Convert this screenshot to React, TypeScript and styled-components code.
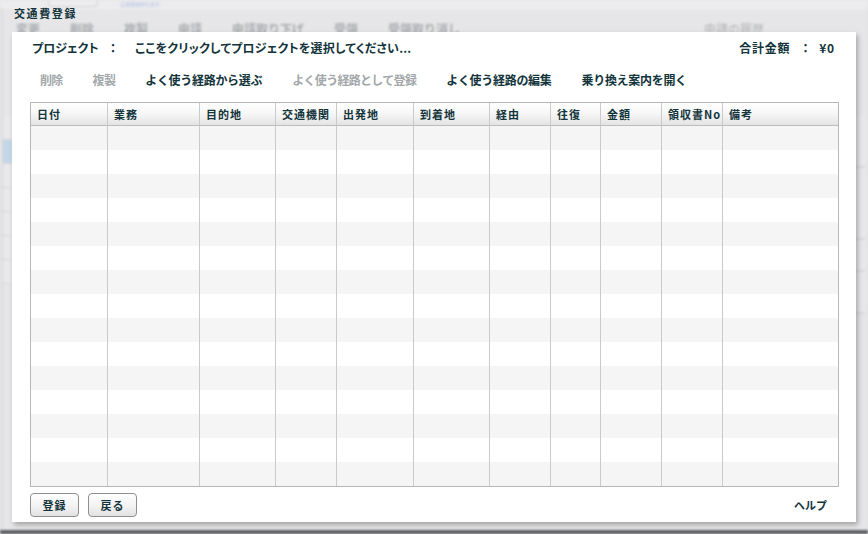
import styled, { createGlobalStyle } from 'styled-components';

const ink = '#12343a';
const faded = '#a9abae';
const jp = `"Noto Sans CJK JP", "Noto Sans", sans-serif`;

const GlobalStyle = createGlobalStyle`
  html, body {
    margin: 0;
    padding: 0;
    background: #e4e4e6;
    font-family: ${jp};
  }
`;

const Stage = styled.div`
  position: relative;
  width: 868px;
  height: 534px;
  overflow: hidden;
  background: #e4e4e6;
`;

/* ---------- blurred page behind the dialog ---------- */

const Backdrop = styled.div`
  position: absolute;
  inset: 0;
  display: flex;
  flex-direction: column;
  filter: blur(0.9px);
`;

const TopBar = styled.div`
  height: 8px;
  display: flex;
  align-items: flex-start;
  gap: 22px;
  padding-left: 48px;
  background: #ececee;
`;

const GhostButton = styled.div`
  width: 48px;
  height: 6px;
  border: 1px solid #d2d2d4;
  border-top: none;
  border-radius: 0 0 4px 4px;
  background: #ededef;
  flex-shrink: 0;
`;

const GhostLink = styled.span`
  margin-top: 1px;
  font-size: 5px;
  line-height: 6px;
  color: #b7c2e4;
  white-space: nowrap;
`;

const Sheet = styled.div`
  flex: 1;
  display: flex;
  flex-direction: column;
  border-top: 1px solid #f1f1f2;
  margin: 0 2px;
  border-left: 1px solid #d6d6d8;
  background: #e6e6e8;
`;

const MenuRow = styled.div`
  height: 26px;
  display: flex;
  align-items: flex-end;
  gap: 30px;
  padding: 0 0 0 13px;
  font-size: 12px;
  font-weight: 700;
  line-height: 12px;
  color: ${faded};
  white-space: nowrap;
`;

const HistoryTab = styled.span`
  margin-left: auto;
  margin-right: 102px;
  font-weight: 400;
  color: #b3b4b6;
`;

const SheetBody = styled.div`
  flex: 1;
  display: flex;
  justify-content: space-between;
  padding-top: 81px;
`;

const SideList = styled.div`
  width: 9px;
  display: flex;
  flex-direction: column;
`;

const SideRow = styled.div<{ $selected?: boolean }>`
  height: 23px;
  border-bottom: 1px solid #d8d8da;
  background: ${({ $selected }) => ($selected ? '#c3d7e8' : '#e9e9eb')};
`;

const RightRail = styled.div`
  width: 9px;
  margin-right: 1px;
  display: flex;
  flex-direction: column;
`;

const RailCell = styled.div<{ $h: number }>`
  height: ${({ $h }) => $h}px;
  border-bottom: 2px solid #d9d9db;
  background: #e9e9eb;
`;

const BottomEdge = styled.div`
  height: 4px;
  background: #5c5f61;
`;

/* ---------- dialog ---------- */

const Dialog = styled.div`
  position: absolute;
  left: 12px;
  top: 0;
  width: 844px;
  display: flex;
  flex-direction: column;
`;

const DialogTitle = styled.div`
  height: 32px;
  padding: 7px 0 0 2px;
  box-sizing: border-box;
  font-size: 11px;
  font-weight: 700;
  line-height: 12px;
  color: ${ink};
  letter-spacing: 1.6px;
`;

const Panel = styled.div`
  height: 490px;
  box-sizing: border-box;
  background: #fff;
  padding-top: 7px;
  display: flex;
  flex-direction: column;
  box-shadow: 2px 3px 5px rgba(0, 0, 0, 0.28);
`;

const ProjectRow = styled.div`
  height: 16px;
  display: flex;
  align-items: center;
  padding: 0 21px 0 20px;
  font-size: 12px;
  font-weight: 700;
  color: ${ink};
  white-space: nowrap;
  font-feature-settings: 'palt';
`;

const FieldLabel = styled.span`
  width: 78px;
`;

const Colon = styled.span`
  width: 25px;
`;

const ProjectPicker = styled.span`
  cursor: pointer;
  letter-spacing: 0.2px;
`;

const Total = styled.span`
  margin-left: auto;
  display: flex;
  letter-spacing: 0.8px;
`;

const TotalColon = styled.span`
  margin: 0 10px 0 12px;
`;

const Toolbar = styled.div`
  height: 20px;
  margin-top: 14px;
  display: flex;
  align-items: center;
  gap: 30px;
  padding-left: 28px;
`;

const ToolItem = styled.span<{ $disabled?: boolean }>`
  font-size: 12px;
  font-weight: 700;
  white-space: nowrap;
  letter-spacing: ${({ $disabled }) => ($disabled ? '-0.7px' : '-0.3px')};
  color: ${({ $disabled }) => ($disabled ? '#a3a8aa' : ink)};
  cursor: ${({ $disabled }) => ($disabled ? 'default' : 'pointer')};
`;

const GridBox = styled.div`
  margin: 13px 17px 0 18px;
  border: 1px solid #b7b7b7;
  width: 807px;
`;

const Table = styled.table`
  width: 807px;
  table-layout: fixed;
  border-collapse: separate;
  border-spacing: 0;
`;

const HeadCell = styled.th`
  height: 22px;
  padding: 0 0 0 6px;
  text-align: left;
  font-size: 11px;
  font-weight: 700;
  color: ${ink};
  letter-spacing: 1px;
  white-space: nowrap;
  overflow: hidden;
  border-bottom: 1px solid #bdbdbd;
  background: linear-gradient(#ffffff 0%, #f7f7f7 45%, #e4e4e4 100%);
  & + & {
    border-left: 1px solid #cacaca;
  }
`;

const BodyRow = styled.tr<{ $striped: boolean }>`
  height: 24px;
  background: ${({ $striped }) => ($striped ? '#f5f5f5' : '#ffffff')};
`;

const BodyCell = styled.td`
  height: 24px;
  padding: 0;
  & + & {
    border-left: 1px solid #cacaca;
  }
`;

const Footer = styled.div`
  margin-top: 6px;
  display: flex;
  align-items: center;
  padding: 0 29px 5px 18px;
`;

const Button = styled.button`
  width: 49px;
  height: 24px;
  margin-right: 9px;
  padding: 0;
  border: 1px solid #8f8f8f;
  border-radius: 4px;
  background: linear-gradient(#ffffff 0%, #f2f2f2 55%, #e2e2e2 100%);
  font-family: ${jp};
  font-size: 11px;
  font-weight: 700;
  color: ${ink};
  letter-spacing: 1px;
  cursor: pointer;
`;

const HelpLink = styled.span`
  margin-left: auto;
  font-size: 11px;
  font-weight: 700;
  color: ${ink};
  cursor: pointer;
`;

const columns: { label: string; width: number }[] = [
  { label: '日付', width: 76 },
  { label: '業務', width: 92 },
  { label: '目的地', width: 76 },
  { label: '交通機関', width: 61 },
  { label: '出発地', width: 77 },
  { label: '到着地', width: 76 },
  { label: '経由', width: 61 },
  { label: '往復', width: 50 },
  { label: '金額', width: 61 },
  { label: '領収書No', width: 61 },
  { label: '備考', width: 116 },
];

const tools = [
  { label: '削除', disabled: true },
  { label: '複製', disabled: true },
  { label: 'よく使う経路から選ぶ' },
  { label: 'よく使う経路として登録', disabled: true },
  { label: 'よく使う経路の編集' },
  { label: '乗り換え案内を開く' },
];

const menu = ['変更', '削除', '複製', '申請', '申請取り下げ', '受領', '受領取り消し'];

const rows = Array.from({ length: 15 }, (_, i) => i);

export default function App() {
  return (
    <>
      <GlobalStyle />
      <Stage>
        <Backdrop>
          <TopBar>
            <GhostButton />
            <GhostLink>交通費履歴を表示</GhostLink>
          </TopBar>
          <Sheet>
            <MenuRow>
              {menu.map((m) => (
                <span key={m}>{m}</span>
              ))}
              <HistoryTab>申請の履歴</HistoryTab>
            </MenuRow>
            <SheetBody>
              <SideList>
                <SideRow />
                <SideRow $selected />
                <SideRow />
                <SideRow />
                <SideRow />
                <SideRow />
                <SideRow />
              </SideList>
              <RightRail>
                <RailCell $h={50} />
                <RailCell $h={70} />
                <RailCell $h={30} />
                <RailCell $h={40} />
              </RightRail>
            </SheetBody>
          </Sheet>
          <BottomEdge />
        </Backdrop>

        <Dialog>
          <DialogTitle>交通費登録</DialogTitle>
          <Panel>
            <ProjectRow>
              <FieldLabel>プロジェクト</FieldLabel>
              <Colon>：</Colon>
              <ProjectPicker>ここをクリックしてプロジェクトを選択してください...</ProjectPicker>
              <Total>
                <span>合計金額</span>
                <TotalColon>：</TotalColon>
                <span>¥0</span>
              </Total>
            </ProjectRow>

            <Toolbar>
              {tools.map((t) => (
                <ToolItem key={t.label} $disabled={t.disabled}>
                  {t.label}
                </ToolItem>
              ))}
            </Toolbar>

            <GridBox>
              <Table>
                <colgroup>
                  {columns.map((c) => (
                    <col key={c.label} style={{ width: c.width }} />
                  ))}
                </colgroup>
                <thead>
                  <tr>
                    {columns.map((c) => (
                      <HeadCell key={c.label}>{c.label}</HeadCell>
                    ))}
                  </tr>
                </thead>
                <tbody>
                  {rows.map((r) => (
                    <BodyRow key={r} $striped={r % 2 === 0}>
                      {columns.map((c) => (
                        <BodyCell key={c.label} />
                      ))}
                    </BodyRow>
                  ))}
                </tbody>
              </Table>
            </GridBox>

            <Footer>
              <Button>登録</Button>
              <Button>戻る</Button>
              <HelpLink>ヘルプ</HelpLink>
            </Footer>
          </Panel>
        </Dialog>
      </Stage>
    </>
  );
}
